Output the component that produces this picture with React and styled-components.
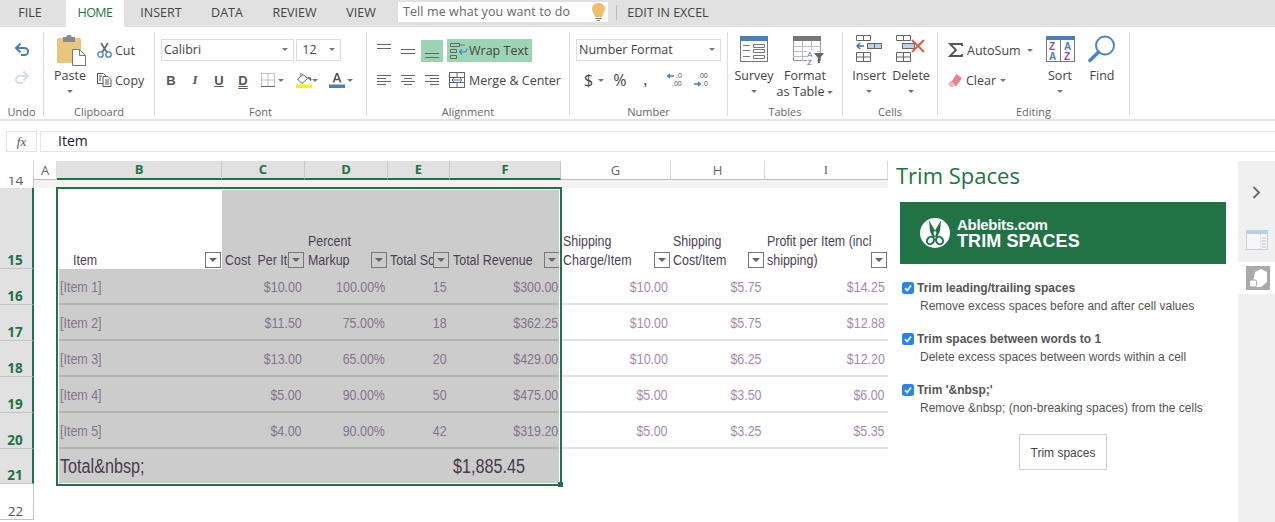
import React from 'react'
import styled, { createGlobalStyle } from 'styled-components'

const GlobalStyle = createGlobalStyle`
  html, body { margin: 0; padding: 0; background: #fff; }
  body { font-family: "Open Sans", "Liberation Sans", sans-serif; overflow: hidden; }
`

const Page = styled.div`
  width: 1275px;
  height: 522px;
  overflow: hidden;
  display: flex;
  flex-direction: column;
  color: #444;
`

/* tabs */
const TabBar = styled.div`
  height: 27px;
  background: #e1e1e1;
  display: flex;
  align-items: flex-start;
  font-size: 12.5px;
  flex: none;
`
const Tab = styled.div`
  width: ${p => p.$w}px;
  height: 27px;
  box-sizing: border-box;
  padding-right: ${p => p.$pr || 0}px;
  line-height: 25px;
  text-align: center;
  white-space: nowrap;
  background: ${p => (p.$active ? '#fff' : 'transparent')};
  color: ${p => (p.$active ? '#217346' : '#444')};
  letter-spacing: ${p => (p.$active ? '-0.5px' : '0')};
`
const TellMe = styled.div`
  width: 210px;
  height: 20px;
  margin: 2px 0 0 9px;
  background: #fff;
  display: flex;
  align-items: center;
  justify-content: space-between;
  padding: 0 3px 1px 5px;
  box-sizing: border-box;
  font-size: 12.5px;
  letter-spacing: 0.1px;
  color: #666;
`
const TabDivider = styled.div`
  width: 1px;
  height: 15px;
  margin: 5px 10px 0 8px;
  background: #bbb;
`

/* ribbon */
const Ribbon = styled.div`
  height: 94px;
  box-sizing: border-box;
  border-bottom: 2px solid #e4e4e4;
  padding-top: 5px;
  display: flex;
  flex: none;
`
const Group = styled.div`
  width: ${p => p.$w}px;
  height: 84px;
  box-sizing: border-box;
  border-right: 1px solid #dedede;
  display: flex;
  flex-direction: column;
  flex: none;
`
const GroupBody = styled.div`
  flex: 1;
  min-height: 0;
  display: flex;
  padding-left: ${p => p.$pl || 0}px;
`
const GroupLabel = styled.div`
  height: 16px;
  margin-bottom: -4px;
  line-height: 15px;
  text-align: center;
  font-size: 11px;
  color: #666;
  flex: none;
`
const BigButton = styled.div`
  width: ${p => p.$w}px;
  margin-right: ${p => p.$mr || 0}px;
  display: flex;
  flex-direction: column;
  align-items: center;
  flex: none;
`
const BigIcon = styled.div`
  height: 30px;
  box-sizing: border-box;
  margin-top: 3px;
  padding-top: ${p => p.$top ?? 1}px;
  padding-left: ${p => p.$ml || 0}px;
  display: flex;
  align-items: flex-start;
  justify-content: center;
`
const BigLabel = styled.div`
  margin-top: 3px;
  line-height: 16px;
  font-size: 12.5px;
  white-space: nowrap;
  text-align: center;
`
const Column = styled.div`
  display: flex;
  flex-direction: column;
  width: ${p => (p.$w ? `${p.$w}px` : 'auto')};
  padding-top: ${p => p.$pt || 0}px;
  gap: ${p => p.$gap || 0}px;
  flex: none;
`
const Row = styled.div`
  display: flex;
  align-items: center;
  justify-content: ${p => (p.$center ? 'center' : 'flex-start')};
  height: ${p => p.$h || 22}px;
  gap: ${p => p.$gap || 0}px;
  font-size: ${p => p.$size || 12.5}px;
  white-space: nowrap;
`
const Caret = styled.span`
  display: inline-block;
  width: 0;
  height: 0;
  vertical-align: middle;
  border-left: 3px solid transparent;
  border-right: 3px solid transparent;
  border-top: 3px solid #777;
  margin-left: ${p => p.$ml || 0}px;
  margin-top: ${p => p.$mt || 0}px;
  flex: none;
`
const Select = styled.div`
  width: ${p => p.$w}px;
  height: 22px;
  box-sizing: border-box;
  border: 1px solid #dedede;
  display: flex;
  align-items: center;
  justify-content: space-between;
  padding: 0 5px 1px 2px;
  font-size: 12.5px;
  color: #444;
`
const Spacer = styled.div`
  width: ${p => p.$w}px;
  flex: none;
`
const Slot = styled.div`
  width: ${p => p.$w}px;
  height: ${p => p.$h || 22}px;
  margin-left: ${p => p.$ml || 0}px;
  display: flex;
  align-items: center;
  justify-content: center;
  flex: none;
  font-family: ${p => (p.$serif ? '"Liberation Serif", serif' : '"Liberation Sans", sans-serif')};
  font-weight: ${p => (p.$bold ? 700 : 400)};
  font-style: ${p => (p.$italic ? 'italic' : 'normal')};
  text-decoration: ${p => (p.$under ? p.$under : 'none')};
  font-size: 13px;
  color: #555;
  background: ${p => (p.$on ? '#9dd4b3' : 'transparent')};
`
const WrapBox = styled.div`
  width: 85px;
  height: 23px;
  margin-left: -6px;
  background: #9dd4b3;
  display: flex;
  align-items: center;
  gap: 1px;
  padding-left: 3px;
  box-sizing: border-box;
  font-size: 12.5px;
`

/* formula bar */
const FormulaBar = styled.div`
  height: 40px;
  box-sizing: border-box;
  padding: 10px 0 9px 6px;
  display: flex;
  gap: 3px;
  flex: none;
`
const FxBox = styled.div`
  width: 31px;
  box-sizing: border-box;
  border: 1px solid #e4e4e4;
  display: flex;
  align-items: center;
  justify-content: center;
  font-family: "Liberation Serif", serif;
  font-style: italic;
  font-size: 13px;
  color: #555;
`
const FormulaInput = styled.div`
  flex: 1;
  box-sizing: border-box;
  border: 1px solid #e4e4e4;
  border-right: none;
  padding-left: 17px;
  line-height: 18px;
  font-size: 14px;
  color: #222;
`

/* main */
const Main = styled.div`
  flex: 1;
  display: flex;
  min-height: 0;
`
const Sheet = styled.div`
  position: relative;
  width: 888px;
  flex: none;
  display: grid;
  grid-template-columns: 34px 23px 165px 83px 83px 62px 111px 110px 94px 123px;
  grid-template-rows: 19px 8px 81px repeat(5, 36px) 35px 36px;
  font-family: "Liberation Sans", sans-serif;
`
const Corner = styled.div`
  border-right: 1px solid #d4d4d4;
`
const ColHead = styled.div`
  box-sizing: border-box;
  display: flex;
  align-items: center;
  justify-content: center;
  font-size: 13px;
  font-family: ${p => (p.$serif ? '"Liberation Serif", serif' : '"Open Sans", sans-serif')};
  padding-bottom: 1px;
  border-right: 1px solid ${p => (p.$on ? '#c8c8c8' : '#dcdcdc')};
  border-bottom: ${p => (p.$on ? '2px solid #217346' : '1px solid #bbb')};
  background: ${p => (p.$on ? '#e1e1e1' : '#fff')};
  color: ${p => (p.$on ? '#217346' : '#666')};
  font-weight: ${p => (p.$on ? 700 : 400)};
`
const RowHead = styled.div`
  box-sizing: border-box;
  display: flex;
  align-items: flex-end;
  justify-content: center;
  padding-right: 2px;
  overflow: hidden;
  font-size: 13.5px;
  line-height: 15px;
  font-family: "Open Sans", sans-serif;
  margin-top: ${p => p.$mt || 0}px;
  background: ${p => (p.$on ? '#e1e1e1' : '#fff')};
  color: ${p => (p.$on ? '#217346' : '#555')};
  font-weight: ${p => (p.$on ? 700 : 400)};
  border-bottom: ${p => (p.$flat ? 'none' : '1px solid #c4c4c4')};
  border-right: ${p => (p.$on ? '2px solid #217346' : '1px solid #c4c4c4')};
`
const Strip = styled.div`
  grid-column: 2 / -1;
  background: #f3f3f1;
`
const BlankCell = styled.div`
  background: #fff;
`
/* the sheet text in the picture is a squeezed Arial */
const Squeezed = styled.span`
  display: inline-block;
  white-space: pre;
  transform: scaleX(0.83);
  transform-origin: ${p => (p.$right ? 'right' : 'left')} center;
`
const HeadCell = styled.div`
  box-sizing: border-box;
  display: flex;
  align-items: flex-end;
  justify-content: space-between;
  overflow: hidden;
  padding: 0 1px 0 ${p => p.$pl || 2}px;
  background: ${p => (p.$sel ? '#cccccc' : '#fff')};
  color: #4d3f55;
  font-size: 15px;
  line-height: 19px;
`
const HeadText = styled.div`
  flex: 1;
  min-width: 0;
  white-space: pre;
  overflow: hidden;
`
const FilterButton = styled.div`
  width: 16px;
  height: 16px;
  margin-bottom: 1px;
  box-sizing: border-box;
  border: 1px solid #777;
  background: ${p => (p.$sel ? '#cccccc' : '#fff')};
  display: flex;
  align-items: center;
  justify-content: center;
  flex: none;
`
const DataCell = styled.div`
  box-sizing: border-box;
  display: flex;
  align-items: center;
  justify-content: ${p => (p.$left ? 'flex-start' : 'flex-end')};
  padding: 0 ${p => (p.$left ? 0 : 3)}px 0 3px;
  background: ${p => (p.$sel ? '#cccccc' : '#fff')};
  color: ${p => (p.$sel ? '#85728c' : '#a58bab')};
  font-size: 15px;
  border-bottom: 2px solid ${p => (p.$sel ? '#b5b3ad' : '#e1e1e1')};
`
const TotalCell = styled.div`
  box-sizing: border-box;
  display: flex;
  align-items: center;
  padding-left: 3px;
  background: #cccccc;
  color: #4a3a4e;
  font-size: 19.5px;
  white-space: nowrap;
`
const Selection = styled.div`
  position: absolute;
  left: 56px;
  top: 26px;
  width: 506px;
  height: 299px;
  box-sizing: border-box;
  border: 2px solid #217346;
  outline: 1px solid #fff;
  outline-offset: -3px;
  pointer-events: none;
`
const Handle = styled.div`
  position: absolute;
  right: -3px;
  bottom: -3px;
  width: 5px;
  height: 5px;
  background: #217346;
`

/* side panel */
const Panel = styled.div`
  width: 350px;
  flex: none;
  box-sizing: border-box;
  padding: 0 12px 0 8px;
  display: flex;
  flex-direction: column;
`
const PanelTitle = styled.div`
  font-size: 22px;
  line-height: 29px;
  color: #217346;
  margin-bottom: 12px;
`
const Banner = styled.div`
  margin-left: 4px;
  height: 62px;
  background: #217346;
  color: #fff;
  display: flex;
  align-items: center;
  gap: 7px;
  padding-left: 20px;
  margin-bottom: 14px;
  font-family: "Liberation Sans", sans-serif;
`
const BannerText = styled.div`
  font-weight: 700;
  line-height: 15px;
  font-size: 15px;
  letter-spacing: -0.3px;
`
const BannerBig = styled.div`
  font-size: 18px;
  line-height: 18px;
  letter-spacing: 0.1px;
`
const Option = styled.div`
  margin: 0 0 13px 6px;
  font-family: "Liberation Sans", sans-serif;
  font-size: 12px;
  color: #555;
`
const OptionHead = styled.div`
  display: flex;
  align-items: center;
  gap: 3px;
  height: 19px;
  font-weight: 700;
`
const Checkbox = styled.span`
  width: 12px;
  height: 12px;
  border-radius: 2.5px;
  background: #2a84f0;
  display: flex;
  align-items: center;
  justify-content: center;
  flex: none;
`
const OptionText = styled.div`
  margin-left: 18px;
  line-height: 19px;
`
const TrimButton = styled.div`
  width: 88px;
  height: 36px;
  margin: 3px 0 0 123px;
  padding-top: 1px;
  box-sizing: border-box;
  border: 1px solid #d0d0d0;
  display: flex;
  align-items: center;
  justify-content: center;
  font-family: "Liberation Sans", sans-serif;
  font-size: 12px;
  color: #444;
`
const Rail = styled.div`
  width: 37px;
  flex: none;
  display: flex;
  flex-direction: column;
`
const RailTop = styled.div`
  height: 101px;
  background: #f0f0f0;
  display: flex;
  flex-direction: column;
  align-items: center;
  padding-top: 25px;
  box-sizing: border-box;
  gap: 31px;
`
const RailMiddle = styled.div`
  height: 32px;
  display: flex;
  align-items: center;
  padding-left: 8px;
`
const RailRest = styled.div`
  flex: 1;
  background: #f0f0f0;
`

/* drawings */
const Undo = ({ color }) => (
  <svg width="16" height="14" viewBox="0 0 16 14" fill="none">
    <path d="M3 6h7.500a3.500 3.500 0 0 1 0 7H7" stroke={color} strokeWidth="2" />
    <path d="M6.500 1.500 2 6l4.500 4.500" stroke={color} strokeWidth="2" />
  </svg>
)
const Redo = ({ color }) => (
  <svg width="16" height="14" viewBox="0 0 16 14" fill="none">
    <path d="M13 6H5.500a3.500 3.500 0 0 0 0 7H9" stroke={color} strokeWidth="2" />
    <path d="M9.500 1.500 14 6l-4.500 4.500" stroke={color} strokeWidth="2" />
  </svg>
)
const PasteIcon = () => (
  <svg width="30" height="31" viewBox="0 0 30 31">
    <rect x="0" y="3" width="24" height="25" rx="1.500" fill="#eac57c" />
    <rect x="6" y="2" width="12" height="5" fill="#8a8a8a" />
    <rect x="9.500" y="0" width="5" height="4" rx="1.500" fill="#8a8a8a" />
    <path d="M15.500 14.500h7l6 6v10h-13z" fill="#fff" stroke="#777" />
    <path d="M22.500 14.500v6h6" fill="none" stroke="#777" />
  </svg>
)
const Scissors = () => (
  <svg width="15" height="16" viewBox="0 0 15 16" fill="none">
    <path d="M4 1l6 9.500M11 1L5 10.500" stroke="#666" strokeWidth="1.700" />
    <circle cx="3.500" cy="12.500" r="2.700" stroke="#4a7fb5" strokeWidth="1.300" />
    <circle cx="11.500" cy="12.500" r="2.700" stroke="#4a7fb5" strokeWidth="1.300" />
  </svg>
)
const CopyIcon = () => (
  <svg width="15" height="14" viewBox="0 0 15 14" fill="none" stroke="#555">
    <path d="M.5.500h6l2 2v8h-8z" fill="#fff" />
    <path d="M6 3.500h5l3 3v7H6z" fill="#fff" />
    <path d="M8 7h4M8 9h4M8 11h4M2 3h3M2 5h2M2 7h2" />
  </svg>
)
const BordersIcon = () => (
  <svg width="14" height="14" viewBox="0 0 14 14" fill="none">
    <path d="M.5.500h13v13M.5.500v13M7 .500v13M.5 7h13" stroke="#888" strokeDasharray="1 1" />
    <path d="M0 13.500h14" stroke="#666" />
  </svg>
)
const FillIcon = () => (
  <svg width="16" height="15" viewBox="0 0 16 15" fill="none">
    <path d="M7 1.500 1.500 6 6 10.500 11.500 5.500z" fill="#fff" stroke="#666" />
    <path d="M5 0v3" stroke="#666" />
    <path d="M11 4.500c2-1 4-.500 4.500 1.500.2 1-.2 2-1 2.500.2-1-.5-2-1.500-2z" fill="#4a7fb5" />
    <rect x="0" y="11.500" width="16" height="3.500" fill="#f7f020" />
  </svg>
)
const FontColorIcon = () => (
  <svg width="16" height="16" viewBox="0 0 16 16">
    <path d="M3.500 10.500 7 1h2l3.500 9.500h-1.800l-.8-2.300H6.100l-.8 2.300zM6.600 6.800h2.800L8 2.800z" fill="#555" />
    <rect x="0" y="12.500" width="16" height="3.500" fill="#4a7fb5" />
  </svg>
)
const Lines = ({ rows }) => (
  <svg width="14" height="14" viewBox="0 0 14 14" stroke="#666" fill="none">
    {rows.map(([y, x1, x2]) => <path key={y} d={`M${x1} ${y}.5H${x2}`} />)}
  </svg>
)
const WrapIcon = () => (
  <svg width="18" height="16" viewBox="0 0 18 16" fill="none">
    <path d="M.5.500h9v3h-9zM.5 6.500h6v3h-6zM.5 12.500h6v3h-6z" stroke="#666" />
    <path d="M10 2h5M17 5.500c0 2.500-1 3.500-3 3.500h-4" stroke="#4a7fb5" strokeWidth="1.200" />
    <path d="M12 6.500 9.500 9l2.500 2.500" stroke="#4a7fb5" strokeWidth="1.200" />
  </svg>
)
const MergeIcon = () => (
  <svg width="16" height="16" viewBox="0 0 16 16" fill="none">
    <rect x=".5" y=".5" width="15" height="15" stroke="#666" />
    <path d="M0 5.500h16M0 10.500h16M8 .500v5M8 10.500v5" stroke="#666" />
    <path d="M3 8h10M5 6l-2 2 2 2M11 6l2 2-2 2" stroke="#4a7fb5" />
  </svg>
)
const IncDecimal = ({ flip }) => (
  <svg width="16" height="16" viewBox="0 0 16 16">
    <path d={flip ? 'M1 12h6M5 10l2.500 2L5 14' : 'M1 4h6M3 2 .5 4 3 6'} stroke="#4a7fb5" fill="none" strokeWidth="1.300" />
    <text x={flip ? 5 : 9} y="6" fontSize="7" fill="#555" fontFamily="Liberation Sans">{flip ? '.00' : '.0'}</text>
    <text x={flip ? 9 : 5} y="14" fontSize="7" fill="#555" fontFamily="Liberation Sans">{flip ? '.0' : '.00'}</text>
  </svg>
)
const SurveyIcon = () => (
  <svg width="28" height="26" viewBox="0 0 28 26" fill="none">
    <rect x=".5" y=".5" width="27" height="25" fill="#fff" stroke="#777" />
    <rect x="0" y="0" width="28" height="5" fill="#4a7fb5" />
    <path d="M3 9.500h7M3 14.500h7M3 20.500h7" stroke="#777" />
    <path d="M13.500 8.500h11v3h-11zM13.500 13.500h11v3h-11zM13.500 19.500h11v3h-11z" stroke="#777" />
  </svg>
)
const TableIcon = () => (
  <svg width="31" height="29" viewBox="0 0 31 29" fill="none">
    <rect x=".5" y=".5" width="27" height="24" fill="#fff" stroke="#999" />
    <rect x="0" y="0" width="28" height="5" fill="#777" />
    <path d="M0 10.500h28M0 15.500h28M0 20.500h28M9.500 5v20M18.500 5v20" stroke="#bbb" />
    <rect x="14" y="14" width="10" height="15" fill="#fff" />
    <text x="14" y="21" fontSize="8" fill="#4a7fb5" fontFamily="Liberation Sans">A</text>
    <text x="14" y="29" fontSize="8" fill="#8a4fb5" fontFamily="Liberation Sans">Z</text>
    <path d="M21 17h10l-4 5v5h-2v-5z" fill="#666" />
  </svg>
)
const InsertIcon = () => (
  <svg width="26" height="27" viewBox="0 0 26 27" fill="none">
    <path d="M.5.500h14v5H.5zM7.500.500v5M.5 17.500h14v9H.5zM7.500 17.500v9M.5 22h14" stroke="#666" />
    <rect x="11.500" y="8.500" width="14" height="5" fill="#bcd2e8" stroke="#666" />
    <path d="M18.500 8.500v5" stroke="#666" />
    <path d="M1 11h7M4 8l-3 3 3 3" stroke="#3f75ad" strokeWidth="1.500" />
  </svg>
)
const DeleteIcon = () => (
  <svg width="30" height="27" viewBox="0 0 30 27" fill="none">
    <path d="M.5.500h14v5H.5zM7.500.500v5M.5 17.500h14v9H.5zM7.500 17.500v9M.5 22h14" stroke="#666" />
    <rect x="6.500" y="8.500" width="12" height="5" fill="#bcd2e8" stroke="#666" />
    <path d="M16 5l12 12M28 5 16 17" stroke="#d9614a" strokeWidth="2" />
  </svg>
)
const SigmaIcon = () => (
  <svg width="15" height="14" viewBox="0 0 15 14" fill="none">
    <path d="M14 3V1H2l6 6-6 6h12v-2" stroke="#555" strokeWidth="1.800" />
  </svg>
)
const EraserIcon = () => (
  <svg width="14" height="13" viewBox="0 0 14 13">
    <path d="M8.500 0 14 4l-6 8.500L2.500 9z" fill="#e9828d" />
    <path d="M2.500 6.500 7 10 5 13H2.500L0 10z" fill="#f3b5bb" />
  </svg>
)
const SortIcon = () => (
  <svg width="29" height="26" viewBox="0 0 29 26" fill="none">
    <rect x=".5" y=".5" width="28" height="25" fill="#fff" stroke="#777" />
    <rect x="0" y="0" width="29" height="4" fill="#4a7fb5" />
    <path d="M14.500 4v22" stroke="#777" />
    <text x="3" y="14" fontSize="10" fontWeight="700" fill="#8a4fb5" fontFamily="Liberation Sans">Z</text>
    <text x="3" y="24" fontSize="10" fontWeight="700" fill="#4a7fb5" fontFamily="Liberation Sans">A</text>
    <text x="18" y="14" fontSize="10" fontWeight="700" fill="#4a7fb5" fontFamily="Liberation Sans">A</text>
    <text x="18" y="24" fontSize="10" fontWeight="700" fill="#8a4fb5" fontFamily="Liberation Sans">Z</text>
  </svg>
)
const FindIcon = () => (
  <svg width="28" height="28" viewBox="0 0 28 28" fill="none">
    <circle cx="17" cy="10.500" r="9" stroke="#4a86c5" strokeWidth="2" />
    <path d="M10.500 17 2 25.500" stroke="#4a86c5" strokeWidth="3.500" strokeLinecap="round" />
  </svg>
)
const Bulb = () => (
  <svg width="13" height="18" viewBox="0 0 13 18">
    <path d="M6.500 0C3 0 0 2.500 0 6c0 3 2.500 4.500 3 8h7c.5-3.500 3-5 3-8 0-3.500-3-6-6.500-6z" fill="#f0bd69" />
    <path d="M3.500 15.500h6M5 17.500h3" stroke="#777" />
  </svg>
)
const FilterCaret = () => (
  <svg width="8" height="4" viewBox="0 0 8 4"><path d="M0 0h8L4 4z" fill="#666" /></svg>
)
const AbleLogo = () => (
  <svg width="30" height="30" viewBox="0 0 30 30">
    <circle cx="15" cy="15" r="15" fill="#fff" />
    <path d="M9 2.500 16.500 15l-1.500 3.500-1.500 2L10 13zM21 2.500 13.500 15l1.500 3.500 1.500 2L20 13z" fill="#217346" />
    <ellipse cx="10.500" cy="22.500" rx="3.300" ry="4" fill="#fff" stroke="#217346" strokeWidth="2" transform="rotate(35 10.500 22.500)" />
    <ellipse cx="19.500" cy="22.500" rx="3.300" ry="4" fill="#fff" stroke="#217346" strokeWidth="2" transform="rotate(-35 19.500 22.500)" />
  </svg>
)
const Check = () => (
  <svg width="10" height="10" viewBox="0 0 10 10" fill="none">
    <path d="M2 5.200 4.200 7.500 8 2.500" stroke="#fff" strokeWidth="1.700" />
  </svg>
)
const Chevron = () => (
  <svg width="9" height="13" viewBox="0 0 9 13" fill="none">
    <path d="M1.500 1 7 6.500 1.500 12" stroke="#666" strokeWidth="1.800" />
  </svg>
)
const PaneIcon = () => (
  <svg width="22" height="20" viewBox="0 0 22 20" fill="none">
    <rect x=".5" y=".5" width="21" height="19" fill="#f6f6f6" stroke="#c9ced4" />
    <rect x="0" y="0" width="22" height="4" fill="#b9cde3" />
    <path d="M14.500 4v15" stroke="#c5d6e8" strokeDasharray="1 1" />
    <path d="M16 8h4M16 11h4M16 14h4M16 17h4" stroke="#c5d6e8" strokeWidth="1.500" />
  </svg>
)
const CubeIcon = () => (
  <svg width="24" height="24" viewBox="0 0 24 24">
    <rect width="24" height="24" fill="#aaa" />
    <path d="M9 6l6-3 6 3v10l-6 5h-6l-2-5z" fill="#fff" />
    <rect x="3.500" y="14" width="7" height="7" rx="1.500" fill="#fff" stroke="#aaa" />
  </svg>
)

const headers = [
  { text: 'Item', pl: 16, sel: false },
  { text: 'Cost  Per Item', pl: 3, sel: true },
  { text: 'Percent\nMarkup', pl: 3, sel: true },
  { text: 'Total Sold', pl: 2, sel: true },
  { text: 'Total Revenue', pl: 3, sel: true },
  { text: 'Shipping\nCharge/Item', pl: 2 },
  { text: 'Shipping\nCost/Item', pl: 2 },
  { text: 'Profit per Item (incl.\nshipping)', pl: 2 }
]
const rows = [
  ['[Item 1]', '$10.00', '100.00%', '15', '$300.00', '$10.00', '$5.75', '$14.25'],
  ['[Item 2]', '$11.50', '75.00%', '18', '$362.25', '$10.00', '$5.75', '$12.88'],
  ['[Item 3]', '$13.00', '65.00%', '20', '$429.00', '$10.00', '$6.25', '$12.20'],
  ['[Item 4]', '$5.00', '90.00%', '50', '$475.00', '$5.00', '$3.50', '$6.00'],
  ['[Item 5]', '$4.00', '90.00%', '42', '$319.20', '$5.00', '$3.25', '$5.35']
]
const options = [
  ['Trim leading/trailing spaces', 'Remove excess spaces before and after cell values'],
  ['Trim spaces between words to 1', 'Delete excess spaces between words within a cell'],
  ["Trim '&nbsp;'", 'Remove &nbsp; (non-breaking spaces) from the cells']
]

const Big = ({ w, mr, icon, label, noCaret, top, ml }) => (
  <BigButton $w={w} $mr={mr}>
    <BigIcon $top={top} $ml={ml}>{icon}</BigIcon>
    <BigLabel>{label}</BigLabel>
    {!noCaret && <Caret $mt={6} />}
  </BigButton>
)

export default function App() {
  return (
    <Page>
      <GlobalStyle />
      <TabBar>
        <Tab $w={66} $pr={6}>FILE</Tab>
        <Tab $w={58} $active>HOME</Tab>
        <Tab $w={74}>INSERT</Tab>
        <Tab $w={58}>DATA</Tab>
        <Tab $w={77}>REVIEW</Tab>
        <Tab $w={56}>VIEW</Tab>
        <TellMe>Tell me what you want to do<Bulb /></TellMe>
        <TabDivider />
        <Tab $w={82}>EDIT IN EXCEL</Tab>
      </TabBar>

      <Ribbon>
        <Group $w={44}>
          <GroupBody>
            <Column $w={43} $pt={10} $gap={14}>
              <Row $h={14} $center><Undo color="#4a7fb5" /></Row>
              <Row $h={14} $center><Redo color="#d2dfec" /></Row>
            </Column>
          </GroupBody>
          <GroupLabel>Undo</GroupLabel>
        </Group>

        <Group $w={111}>
          <GroupBody $pl={9}>
            <Big w={34} mr={10} icon={<PasteIcon />} label="Paste" top={0} ml={4} />
            <Column $pt={7} $gap={8}>
              <Row $gap={3}><Scissors />Cut</Row>
              <Row $gap={3}><CopyIcon />Copy</Row>
            </Column>
          </GroupBody>
          <GroupLabel>Clipboard</GroupLabel>
        </Group>

        <Group $w={212}>
          <GroupBody $pl={6}>
            <Column $pt={7} $gap={8}>
              <Row $gap={2}>
                <Select $w={133}>Calibri<Caret /></Select>
                <Select $w={45}>&nbsp;12<Caret /></Select>
              </Row>
              <Row>
                <Spacer $w={2} />
                <Slot $w={16} $bold>B</Slot>
                <Spacer $w={8} />
                <Slot $w={16} $bold $italic $serif>I</Slot>
                <Spacer $w={8} />
                <Slot $w={16} $bold $under="underline">U</Slot>
                <Spacer $w={8} />
                <Slot $w={16} $bold $under="underline double">D</Slot>
                <Spacer $w={10} />
                <BordersIcon />
                <Caret $ml={3} />
                <Spacer $w={12} />
                <FillIcon />
                <Caret />
                <Spacer $w={11} />
                <FontColorIcon />
                <Caret $ml={2} />
              </Row>
            </Column>
          </GroupBody>
          <GroupLabel>Font</GroupLabel>
        </Group>

        <Group $w={203}>
          <GroupBody $pl={10}>
            <Column $pt={7} $gap={7}>
              <Row $h={23} $gap={10}>
                <Lines rows={[[0, 0, 14], [4, 0, 14]]} />
                <Lines rows={[[5, 0, 14], [9, 0, 14]]} />
                <Slot $w={22} $on $ml={-4}><Lines rows={[[9, 0, 14], [13, 0, 14]]} /></Slot>
                <WrapBox><WrapIcon />Wrap Text</WrapBox>
              </Row>
              <Row $gap={10}>
                <Lines rows={[[2, 0, 14], [5, 0, 9], [8, 0, 14], [11, 0, 9]]} />
                <Lines rows={[[2, 0, 14], [5, 3, 11], [8, 0, 14], [11, 3, 11]]} />
                <Lines rows={[[2, 0, 14], [5, 5, 14], [8, 0, 14], [11, 5, 14]]} />
                <Row $gap={4}><MergeIcon />Merge &amp; Center</Row>
              </Row>
            </Column>
          </GroupBody>
          <GroupLabel>Alignment</GroupLabel>
        </Group>

        <Group $w={158}>
          <GroupBody $pl={6}>
            <Column $pt={7} $gap={8}>
              <Select $w={145}>Number Format<Caret /></Select>
              <Row $size={16}>
                <Spacer $w={8} />
                <span>$</span>
                <Caret $ml={5} />
                <Spacer $w={9} />
                <span>%</span>
                <Spacer $w={14} />
                <Slot $w={10} $bold>,</Slot>
                <Spacer $w={17} />
                <IncDecimal />
                <Spacer $w={10} />
                <IncDecimal flip />
              </Row>
            </Column>
          </GroupBody>
          <GroupLabel>Number</GroupLabel>
        </Group>

        <Group $w={115}>
          <GroupBody $pl={5}>
            <Big w={42} mr={2} icon={<SurveyIcon />} label="Survey" />
            <BigButton $w={56}>
              <BigIcon $ml={6}><TableIcon /></BigIcon>
              <BigLabel>Format<br />as Table<Caret $ml={3} /></BigLabel>
            </BigButton>
          </GroupBody>
          <GroupLabel>Tables</GroupLabel>
        </Group>

        <Group $w={95}>
          <GroupBody $pl={7}>
            <Big w={38} mr={3} icon={<InsertIcon />} label="Insert" top={0} />
            <Big w={40} icon={<DeleteIcon />} label="Delete" top={0} />
          </GroupBody>
          <GroupLabel>Cells</GroupLabel>
        </Group>

        <Group $w={192}>
          <GroupBody $pl={10}>
            <Column $w={92} $pt={7} $gap={8}>
              <Row $gap={4}><SigmaIcon />AutoSum<Caret $ml={2} /></Row>
              <Row $gap={4}><EraserIcon />Clear<Caret /></Row>
            </Column>
            <Big w={40} mr={4} icon={<SortIcon />} label="Sort" />
            <Big w={36} icon={<FindIcon />} label="Find" noCaret top={0} />
          </GroupBody>
          <GroupLabel>Editing</GroupLabel>
        </Group>
      </Ribbon>

      <FormulaBar>
        <FxBox>fx</FxBox>
        <FormulaInput>Item</FormulaInput>
      </FormulaBar>

      <Main>
        <Sheet>
          <Corner />
          <ColHead>A</ColHead>
          <ColHead $on>B</ColHead>
          <ColHead $on>C</ColHead>
          <ColHead $on>D</ColHead>
          <ColHead $on>E</ColHead>
          <ColHead $on>F</ColHead>
          <ColHead>G</ColHead>
          <ColHead>H</ColHead>
          <ColHead $serif>I</ColHead>

          <RowHead $mt={-3} $flat>14</RowHead>
          <Strip />

          <RowHead $on>15</RowHead>
          <BlankCell />
          {headers.map(h => (
            <HeadCell key={h.text} $pl={h.pl} $sel={h.sel}>
              <HeadText><Squeezed>{h.text}</Squeezed></HeadText>
              <FilterButton $sel={h.sel}><FilterCaret /></FilterButton>
            </HeadCell>
          ))}

          {rows.map((r, i) => (
            <React.Fragment key={r[0]}>
              <RowHead $on>{16 + i}</RowHead>
              <BlankCell />
              {r.map((v, j) => (
                <DataCell key={j} $left={j === 0} $sel={j < 5}>
                  <Squeezed $right={j > 0}>{v}</Squeezed>
                </DataCell>
              ))}
            </React.Fragment>
          ))}

          <RowHead $on>21</RowHead>
          <BlankCell />
          <TotalCell><Squeezed>{'Total&nbsp;'}</Squeezed></TotalCell>
          <TotalCell />
          <TotalCell />
          <TotalCell />
          <TotalCell><Squeezed>$1,885.45</Squeezed></TotalCell>
          <BlankCell />
          <BlankCell />
          <BlankCell />

          <RowHead>22</RowHead>

          <Selection><Handle /></Selection>
        </Sheet>

        <Panel>
          <PanelTitle>Trim Spaces</PanelTitle>
          <Banner>
            <AbleLogo />
            <BannerText>
              Ablebits.com
              <BannerBig>TRIM SPACES</BannerBig>
            </BannerText>
          </Banner>
          {options.map(([title, text]) => (
            <Option key={title}>
              <OptionHead><Checkbox><Check /></Checkbox>{title}</OptionHead>
              <OptionText>{text}</OptionText>
            </Option>
          ))}
          <TrimButton>Trim spaces</TrimButton>
        </Panel>

        <Rail>
          <RailTop><Chevron /><PaneIcon /></RailTop>
          <RailMiddle><CubeIcon /></RailMiddle>
          <RailRest />
        </Rail>
      </Main>
    </Page>
  )
}
